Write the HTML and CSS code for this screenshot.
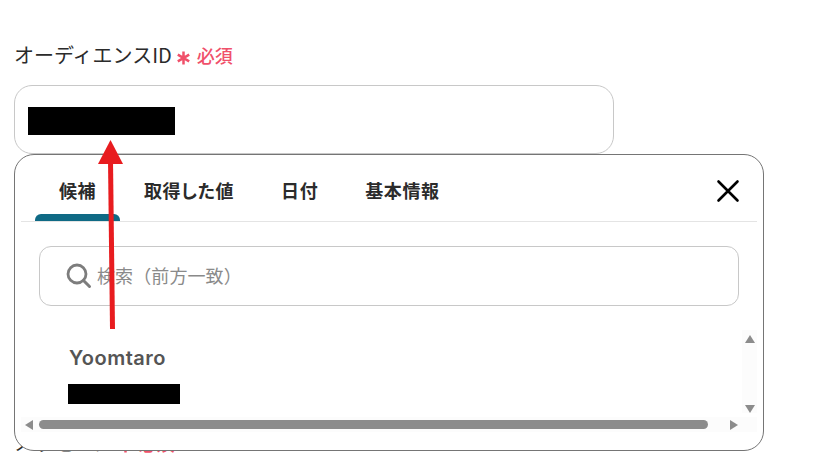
FILE: index.html
```html
<!DOCTYPE html>
<html lang="ja">
<head>
<meta charset="utf-8">
<title>オーディエンスID</title>
<link rel="stylesheet" href="styles.css">
</head>
<body>
<main class="page">
  <section class="field">
    <div class="label"><span>オーディエンスID</span><span class="req"><svg class="star" width="13" height="14" viewBox="0 0 13 14"><path d="M6.500 0.500V13.500M0.800 3.700 12.200 10.300M12.200 3.700 0.800 10.300" fill="none" stroke="#f0506a" stroke-width="2.500"/></svg>必須</span></div>
    <div class="input"><span class="redact redact-input"></span></div>
  </section>
  <section class="field next">
    <div class="label"><span>メッセージ</span><span class="req"><svg class="star" width="13" height="14" viewBox="0 0 13 14"><path d="M6.500 0.500V13.500M0.800 3.700 12.200 10.300M12.200 3.700 0.800 10.300" fill="none" stroke="#f0506a" stroke-width="2.500"/></svg>必須</span></div>
  </section>

  <div class="popup">
    <nav class="tabs">
      <span class="tab active">候補</span>
      <span class="tab">取得した値</span>
      <span class="tab">日付</span>
      <span class="tab">基本情報</span>
      <svg class="close" width="24" height="24" viewBox="0 0 24 24"><path d="M2.500 2.500 21.500 21.500M21.500 2.500 2.500 21.500" fill="none" stroke="#000" stroke-width="2.600" stroke-linecap="round"/></svg>
    </nav>
    <div class="search">
      <svg width="26" height="26" viewBox="0 0 26 26"><circle cx="11" cy="11" r="9" fill="none" stroke="#7d7d7d" stroke-width="2.800"/><path d="M17.500 17.500 23.500 23.500" stroke="#7d7d7d" stroke-width="3" stroke-linecap="round"/></svg>
      <span class="placeholder">検索（前方一致）</span>
    </div>
    <div class="option">
      <div class="option-name">Yoomtaro</div>
      <span class="redact redact-option"></span>
    </div>
    <div class="vbar">
      <svg width="10" height="8" viewBox="0 0 10 8"><path d="M5 0 10 8H0Z" fill="#8c8c8c"/></svg>
      <svg width="10" height="8" viewBox="0 0 10 8"><path d="M5 8 10 0H0Z" fill="#8c8c8c"/></svg>
    </div>
    <div class="hbar">
      <svg width="8" height="10" viewBox="0 0 8 10"><path d="M0 5 8 0V10Z" fill="#8c8c8c"/></svg>
      <span class="thumb"></span>
      <svg width="8" height="10" viewBox="0 0 8 10"><path d="M8 5 0 0V10Z" fill="#8c8c8c"/></svg>
    </div>
  </div>

  <svg class="arrow" width="30" height="190" viewBox="0 0 30 190"><path d="M12.500 20 14.500 189" stroke="#e81c1f" stroke-width="5" fill="none"/><path d="M12.500 0 25 24H0Z" fill="#e81c1f"/></svg>
</main>
</body>
</html>
```
FILE: styles.css
```css
* { box-sizing: border-box; }
html, body { margin: 0; padding: 0; background: #fff; }
body { width: 839px; height: 472px; overflow: hidden; font-family: "Noto Sans CJK JP", "Noto Sans", sans-serif; color: #2b2b2b; }
.page { position: relative; height: 472px; padding: 41px 0 0 14px; }
.label { display: flex; align-items: center; height: 27px; font-size: 20px; line-height: 27px; color: #2b2b2b; gap: 5px; }
.req { display: inline-flex; align-items: center; color: #f0506a; font-size: 18px; font-weight: 500; gap: 7px; margin-top: 2px; }
.star { margin-top: 4px; }
.input { width: 600px; height: 69px; margin-top: 17px; border: 1px solid #c8c8c8; border-radius: 18px; padding: 21px 13px; }
.redact { display: block; background: #000; }
.redact-input { width: 147px; height: 28px; }
.next { margin-top: 275px; }
.popup { position: absolute; left: 14px; top: 154px; width: 750px; height: 297px; background: #fff; border: 1px solid #757575; border-radius: 20px; }
.tabs { position: relative; display: flex; align-items: stretch; height: 67px; margin: 0 6px; border-bottom: 1px solid #e4e4e4; padding-left: 14px; }
.tab { width: 85px; padding-top: 22px; text-align: center; font-size: 18px; line-height: 26px; font-weight: 700; letter-spacing: 0.6px; font-feature-settings: "palt"; color: #2b2b2b; white-space: nowrap; position: relative; }
.tab + .tab { width: auto; margin-left: 24px; margin-right: 24px; }
.tab + .tab + .tab { margin-left: 23px; }
.tab.active::after { content: ""; position: absolute; left: 0; right: 0; bottom: 0; height: 7px; background: #0f6a85; border-radius: 6px 6px 0 0; }
.close { position: absolute; right: 17px; top: 24px; }
.search { display: flex; align-items: center; margin: 24px 24px 0; height: 60px; border: 1px solid #c8c8c8; border-radius: 12px; padding-left: 26px; gap: 5px; }
.placeholder { font-size: 18px; letter-spacing: 0.1px; line-height: 24px; margin-top: -2px; color: #8a8a8a; }
.option { padding: 38px 0 0 54px; }
.option-name { font-family: Inter, "Noto Sans", sans-serif; font-weight: 600; font-size: 20px; letter-spacing: 0.5px; line-height: 29px; color: #555; }
.redact-option { width: 112px; height: 20px; margin: 11px 0 0 -1px; }
.vbar { position: absolute; right: 6px; top: 175px; width: 15px; height: 83px; background: #fcfcfc; display: flex; flex-direction: column; justify-content: space-between; align-items: center; padding: 5px 0 0; }
.hbar { position: absolute; left: 6px; right: 6px; top: 262px; height: 15px; background: #fcfcfc; display: flex; align-items: center; padding: 0 19px 0 4px; }
.thumb { width: 669px; height: 9px; margin: 0 22px 0 6px; border-radius: 5px; background: #8c8c8c; }
.arrow { position: absolute; left: 98px; top: 140px; }
```
